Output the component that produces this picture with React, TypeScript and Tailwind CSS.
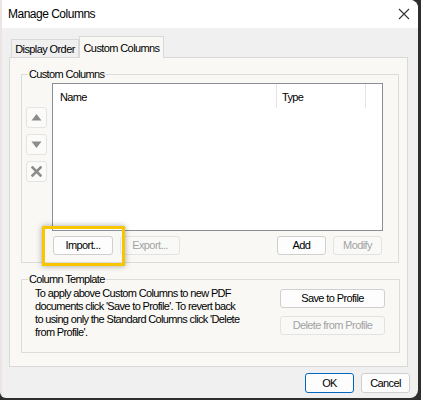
const font = "font-['Liberation_Sans',Arial,sans-serif]";

function Btn({ children, disabled, w, primary }: { children: string; disabled?: boolean; w: string; primary?: boolean }) {
  return (
    <button
      className={`${w} h-[19px] flex items-center justify-center rounded-[3px] border text-[11px] tracking-[-0.6px] leading-none ${
        primary
          ? "border-[#0067c0] border-[1.5px] bg-[#fdfdfd] text-black"
          : disabled
            ? "border-[#e3e3e3] bg-[#f9f9f7] text-[#a3a3a3]"
            : "border-[#cfcfcf] bg-[#fdfdfd] text-black"
      }`}
    >
      {children}
    </button>
  );
}

function ArrowBtn({ kind }: { kind: "up" | "down" | "x" }) {
  return (
    <div className="w-[21px] h-[21px] flex items-center justify-center rounded-[3px] border border-[#e4e4e4] bg-[#fbfbf9]">
      <svg width="11" height="11" viewBox="0 0 11 11">
        {kind === "up" && <path d="M5.5 2 L10.5 8.5 L0.5 8.5 Z" fill="#8c8c8c" />}
        {kind === "down" && <path d="M0.5 2.5 L10.5 2.5 L5.5 9 Z" fill="#8c8c8c" />}
        {kind === "x" && (
          <path d="M1.5 1.5 L9.5 9.5 M9.5 1.5 L1.5 9.5" stroke="#8c8c8c" strokeWidth="2.6" strokeLinecap="square" />
        )}
      </svg>
    </div>
  );
}

function GroupLabel({ children }: { children: string }) {
  return (
    <span className="absolute left-[6px] -top-[9px] px-[1px] leading-[16px] bg-[#f9f8f4]">{children}</span>
  );
}

export default function App() {
  return (
    <div className={`w-[421px] h-[400px] bg-[#2e2e2e] ${font} text-black`}>
      <div className="w-[418px] h-[398px] flex flex-col rounded-tr-[8px] rounded-br-[8px] rounded-bl-[6px] overflow-hidden border-l-2 border-[#ece4e4] bg-[#f0f0f0]">
        {/* title bar */}
        <div className="h-[28px] shrink-0 bg-white flex items-center justify-between pl-[6px] pr-[8px]">
          <span className="text-[12px] tracking-[-0.5px]">Manage Columns</span>
          <svg width="12" height="12" viewBox="0 0 12 12">
            <path d="M1 1 L11 11 M11 1 L1 11" stroke="#333" strokeWidth="1.1" />
          </svg>
        </div>

        <div className="flex flex-col pl-[7px] pt-[8px]">
          {/* tabs */}
          <div className="flex items-end ml-[2px] h-[21px] text-[11px] tracking-[-0.6px]">
            <div className="h-[18px] w-[68px] flex items-center justify-center border border-b-0 border-[#d9d9d9] bg-[#f0f0f0] pt-[1px]">
              Display Order
            </div>
            <div className="relative z-10 -mb-[1px] h-[22px] w-[85px] flex items-start justify-center pt-[3px] border border-b-0 border-[#d9d9d9] bg-[#f9f8f4]">
              Custom Columns
            </div>
          </div>

          {/* panel */}
          <div className="w-[399px] h-[310px] border border-[#d9d9d9] bg-[#f9f8f4] flex flex-col text-[11px] tracking-[-0.65px]">
            <div className="relative ml-[11px] mt-[16px] w-[378px] border border-[#dcdcdc] pl-[4px] pt-[8px] pb-[7px]">
              <GroupLabel>Custom Columns</GroupLabel>
              <div className="flex gap-[5px]">
                <div className="flex flex-col gap-[6px] pt-[24px]">
                  <ArrowBtn kind="up" />
                  <ArrowBtn kind="down" />
                  <ArrowBtn kind="x" />
                </div>
                <div className="flex flex-col">
                  <div className="w-[331px] h-[148px] border border-[#8a8f96] bg-white">
                    <div className="flex h-[24px]">
                      <div className="w-[224px] pl-[7px] pt-[5px] border-r border-[#e5e5e5]">Name</div>
                      <div className="w-[89px] pl-[5px] pt-[5px] border-r border-[#e5e5e5]">Type</div>
                    </div>
                  </div>
                  <div className="flex justify-between mt-[5px] px-[1px]">
                    <div className="flex gap-[7px]">
                      <Btn w="w-[60px]">Import...</Btn>
                      <Btn w="w-[60px]" disabled>
                        Export...
                      </Btn>
                    </div>
                    <div className="flex gap-[7px]">
                      <Btn w="w-[49px]">Add</Btn>
                      <Btn w="w-[49px]" disabled>
                        Modify
                      </Btn>
                    </div>
                  </div>
                </div>
              </div>
              {/* highlight annotation */}
              <div className="absolute left-[20px] top-[151px] w-[83px] h-[40px] border-[3px] border-[#f7c600] shadow-[0_0_6px_rgba(0,0,0,0.35)]" />
            </div>

            <div className="relative ml-[11px] mt-[16px] w-[379px] border border-[#dcdcdc] pl-[13px] pr-[14px] pt-[7px] pb-[13px]">
              <GroupLabel>Column Template</GroupLabel>
              <div className="flex justify-between">
                <p className="leading-[13px]">
                  To apply above Custom Columns to new PDF
                  <br />
                  documents click 'Save to Profile'. To revert back
                  <br />
                  to using only the Standard Columns click 'Delete
                  <br />
                  from Profile'.
                </p>
                <div className="flex flex-col gap-[8px] pt-[2px]">
                  <Btn w="w-[105px]">Save to Profile</Btn>
                  <Btn w="w-[105px]" disabled>
                    Delete from Profile
                  </Btn>
                </div>
              </div>
            </div>
          </div>

          {/* footer */}
          <div className="flex justify-end gap-[7px] pr-[8px] mt-[6px]">
            <Btn w="w-[49px] !h-[20px]" primary>
              OK
            </Btn>
            <Btn w="w-[49px] !h-[20px]">Cancel</Btn>
          </div>
        </div>
      </div>
    </div>
  );
}
